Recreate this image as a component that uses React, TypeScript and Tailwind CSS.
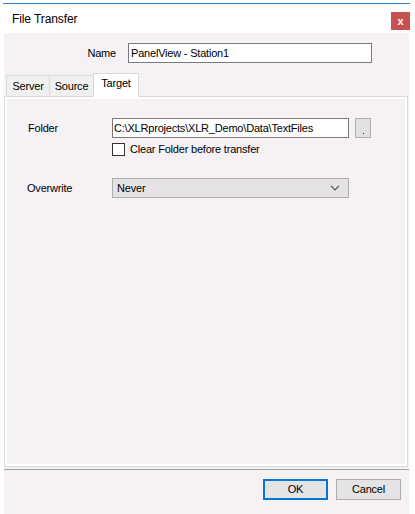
import React from 'react';

const font = { fontFamily: '"Liberation Sans", Arial, sans-serif' };

const Tab: React.FC<{ label: string; active?: boolean; w: string }> = ({ label, active, w }) => (
    <div
        className={
            active
                ? `${w} h-[24px] -mb-px bg-white border border-[#d9d9d9] border-b-white flex items-start justify-center pt-[3px] z-10`
                : `${w} h-[21px] bg-[#f0f0f0] border border-[#d9d9d9] border-b-0 -mr-px flex items-start justify-center pt-[4px]`
        }
    >
        {label}
    </div>
);

export default function App() {
    return (
        <div className="w-[415px] h-[514px] bg-white text-[11px] tracking-[-0.2px] leading-[13px] text-black overflow-hidden" style={font}>
            <div className="ml-[3px] mt-[3px] w-[407px] border-t border-[#3c86cf]">
                {/* title bar */}
                <div className="h-[29px] flex items-center justify-between pl-[9px] bg-white">
                    <span className="text-[12px] tracking-[-0.1px] mt-[1px]">File Transfer</span>
                    <button className="w-[19px] h-[18px] mt-[5px] bg-[#c75050] text-white text-[11px] font-bold flex items-center justify-center">
                        x
                    </button>
                </div>

                {/* body */}
                <div className="ml-px w-[405px] h-[481px] bg-[#f5f1f5] flex flex-col">
                    <div className="flex items-center mt-[10px] h-[20px] shrink-0">
                        <span className="w-[113px] text-right pr-px">Name</span>
                        <div className="ml-[11px] w-[244px] h-[20px] bg-white border border-[#7a7a7a] pl-[2px] flex items-center">
                            PanelView - Station1
                        </div>
                    </div>

                    <div className="flex mt-[10px] ml-[2px] items-end shrink-0">
                        <Tab label="Server" w="w-[44px]" />
                        <Tab label="Source" w="w-[45px]" />
                        <Tab label="Target" active w="w-[46px]" />
                    </div>

                    <div className="w-[404px] h-[371px] shrink-0 border border-[#d9d9d9] p-[2px] bg-white flex">
                        <div className="flex-1 bg-[#f5f1f5] flex flex-col pt-[19px]">
                            <div className="flex">
                                <span className="w-[105px] pl-[21px] pt-[4px]">Folder</span>
                                <div className="flex flex-col">
                                    <div className="flex">
                                        <div className="w-[237px] h-[20px] bg-white border border-[#7a7a7a] pl-px flex items-center">
                                            C:\XLRprojects\XLR_Demo\Data\TextFiles
                                        </div>
                                        <div className="ml-[6px] w-[16px] h-[20px] bg-[#e1e1e1] border border-[#adadad] flex items-end justify-center pb-[3px]">
                                            <span className="block w-px h-px bg-[#800000]" />
                                        </div>
                                    </div>
                                    <div className="flex items-center mt-[5px]">
                                        <span className="w-[13px] h-[13px] bg-white border border-[#333333]" />
                                        <span className="ml-[5px]">Clear Folder before transfer</span>
                                    </div>
                                </div>
                            </div>

                            <div className="flex mt-[22px]">
                                <span className="w-[105px] pl-[20px] pt-[4px]">Overwrite</span>
                                <div className="w-[237px] h-[20px] bg-[#e5e3e5] border border-[#adadad] pl-[4px] pr-[8px] flex items-center justify-between">
                                    <span>Never</span>
                                    <svg width="10" height="6" viewBox="0 0 10 6" fill="none" stroke="#505050" strokeWidth="1.2">
                                        <path d="M1 0.8 L5 4.8 L9 0.8" />
                                    </svg>
                                </div>
                            </div>
                        </div>
                    </div>

                    <div className="mt-[2px] h-px shrink-0 bg-[#a0a0a0]" />

                    <div className="flex justify-end gap-[8px] mt-[9px] pr-[8px] shrink-0">
                        <button className="w-[65px] h-[21px] bg-[#e5e3e5] border-2 border-[#0078d7] flex items-center justify-center">
                            OK
                        </button>
                        <button className="w-[65px] h-[21px] bg-[#e5e3e5] border border-[#adadad] flex items-center justify-center">
                            Cancel
                        </button>
                    </div>
                </div>
            </div>
        </div>
    );
}
